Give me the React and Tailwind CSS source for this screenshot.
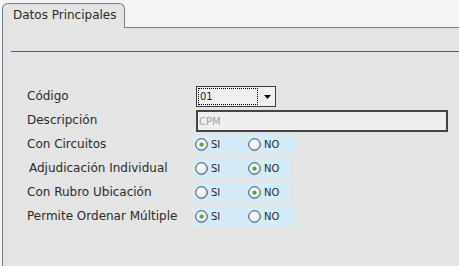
import React from "react";

function Radio({ checked }) {
  return (
    <svg width="13" height="13" viewBox="0 0 13 13" className="shrink-0">
      <defs>
        <radialGradient id="rg" cx="40%" cy="35%" r="70%">
          <stop offset="0%" stopColor="#ffffff" />
          <stop offset="70%" stopColor="#ececec" />
          <stop offset="100%" stopColor="#c8c8c8" />
        </radialGradient>
      </defs>
      <circle cx="6.5" cy="6.5" r="5.8" fill="url(#rg)" stroke="#2a4a6e" strokeWidth="1" />
      {checked && <circle cx="6.5" cy="6.5" r="2" fill="#1fa81f" />}
      {checked && <circle cx="6" cy="6" r="0.8" fill="#7fe07f" />}
    </svg>
  );
}

function RadioRow({ label, si, width, indent }) {
  return (
    <div className="flex items-center h-[20px]">
      <div className={indent ? "w-[166px] pl-[2px] text-[12px] text-[#2a2a2a] -mt-[1px]" : "w-[166px] text-[12px] text-[#2a2a2a] -mt-[1px]"}>{label}</div>
      <div className={`flex items-center h-[20px] bg-[#d6ebf8] pl-[2px] ${width}`}>
        <div className="flex items-center gap-[3px] w-[53px]">
          <Radio checked={si} />
          <span className="text-[10px] text-[#2a2a2a]">SI</span>
        </div>
        <div className="flex items-center gap-[3px]">
          <Radio checked={!si} />
          <span className="text-[10px] text-[#2a2a2a]">NO</span>
        </div>
      </div>
    </div>
  );
}

export default function App() {
  return (
    <div className="w-[459px] h-[266px] bg-[#f4f4f4] font-['DejaVu_Sans',sans-serif] pt-[3px] pl-[2px] overflow-hidden flex flex-col">
      <div className="flex h-[25px] shrink-0">
        <div className="w-[123px] border border-b-0 border-[#7a8086] rounded-t-[6px] bg-[#e4e4e4] pl-[10px] pt-[4px] text-[12px] leading-[15px] text-[#2a2a2a]">
          Datos Principales
        </div>
        <div className="flex-1 border-b border-[#7a8086]"></div>
      </div>
      <div className="flex-1 bg-[#e4e4e4] border-l border-[#7a8086] pl-[8px] pt-[23px]">
        <div className="h-px bg-[#2e6da4]"></div>
        <div className="pl-[16px] mt-[34px] flex flex-col">
          <div className="flex items-center h-[21px]">
            <div className="w-[169px] text-[12px] text-[#2a2a2a] -mt-[1px]">Código</div>
            <div className="flex w-[80px] h-[21px] border border-[#3c3c3c] bg-[#f0f0f0]">
              <div className="flex-1 m-[1px] border border-dotted border-black flex items-center pl-[1px] text-[10px] text-[#1a1a1a]">
                01
              </div>
              <div className="w-[16px] flex items-center justify-center">
                <svg width="7" height="4" viewBox="0 0 7 4">
                  <path d="M0 0H7L3.5 4Z" fill="#000" />
                </svg>
              </div>
            </div>
          </div>
          <div className="flex items-center h-[22px] mt-[3px]">
            <div className="w-[169px] text-[12px] text-[#2a2a2a] -mt-[3px]">Descripción</div>
            <div className="w-[252px] h-[22px] border-2 border-[#444] bg-[#efefef] flex items-center pl-[1px] text-[10px] text-[#a0a0a0]">
              CPM
            </div>
          </div>
          <div className="flex flex-col gap-[4px] mt-[2px]">
            <RadioRow label="Con Circuitos" si={true} width="w-[103px]" />
            <RadioRow label="Adjudicación Individual" si={false} width="w-[97px]" indent />
            <RadioRow label="Con Rubro Ubicación" si={false} width="w-[97px]" />
            <RadioRow label="Permite Ordenar Múltiple" si={true} width="w-[103px]" />
          </div>
        </div>
      </div>
    </div>
  );
}
